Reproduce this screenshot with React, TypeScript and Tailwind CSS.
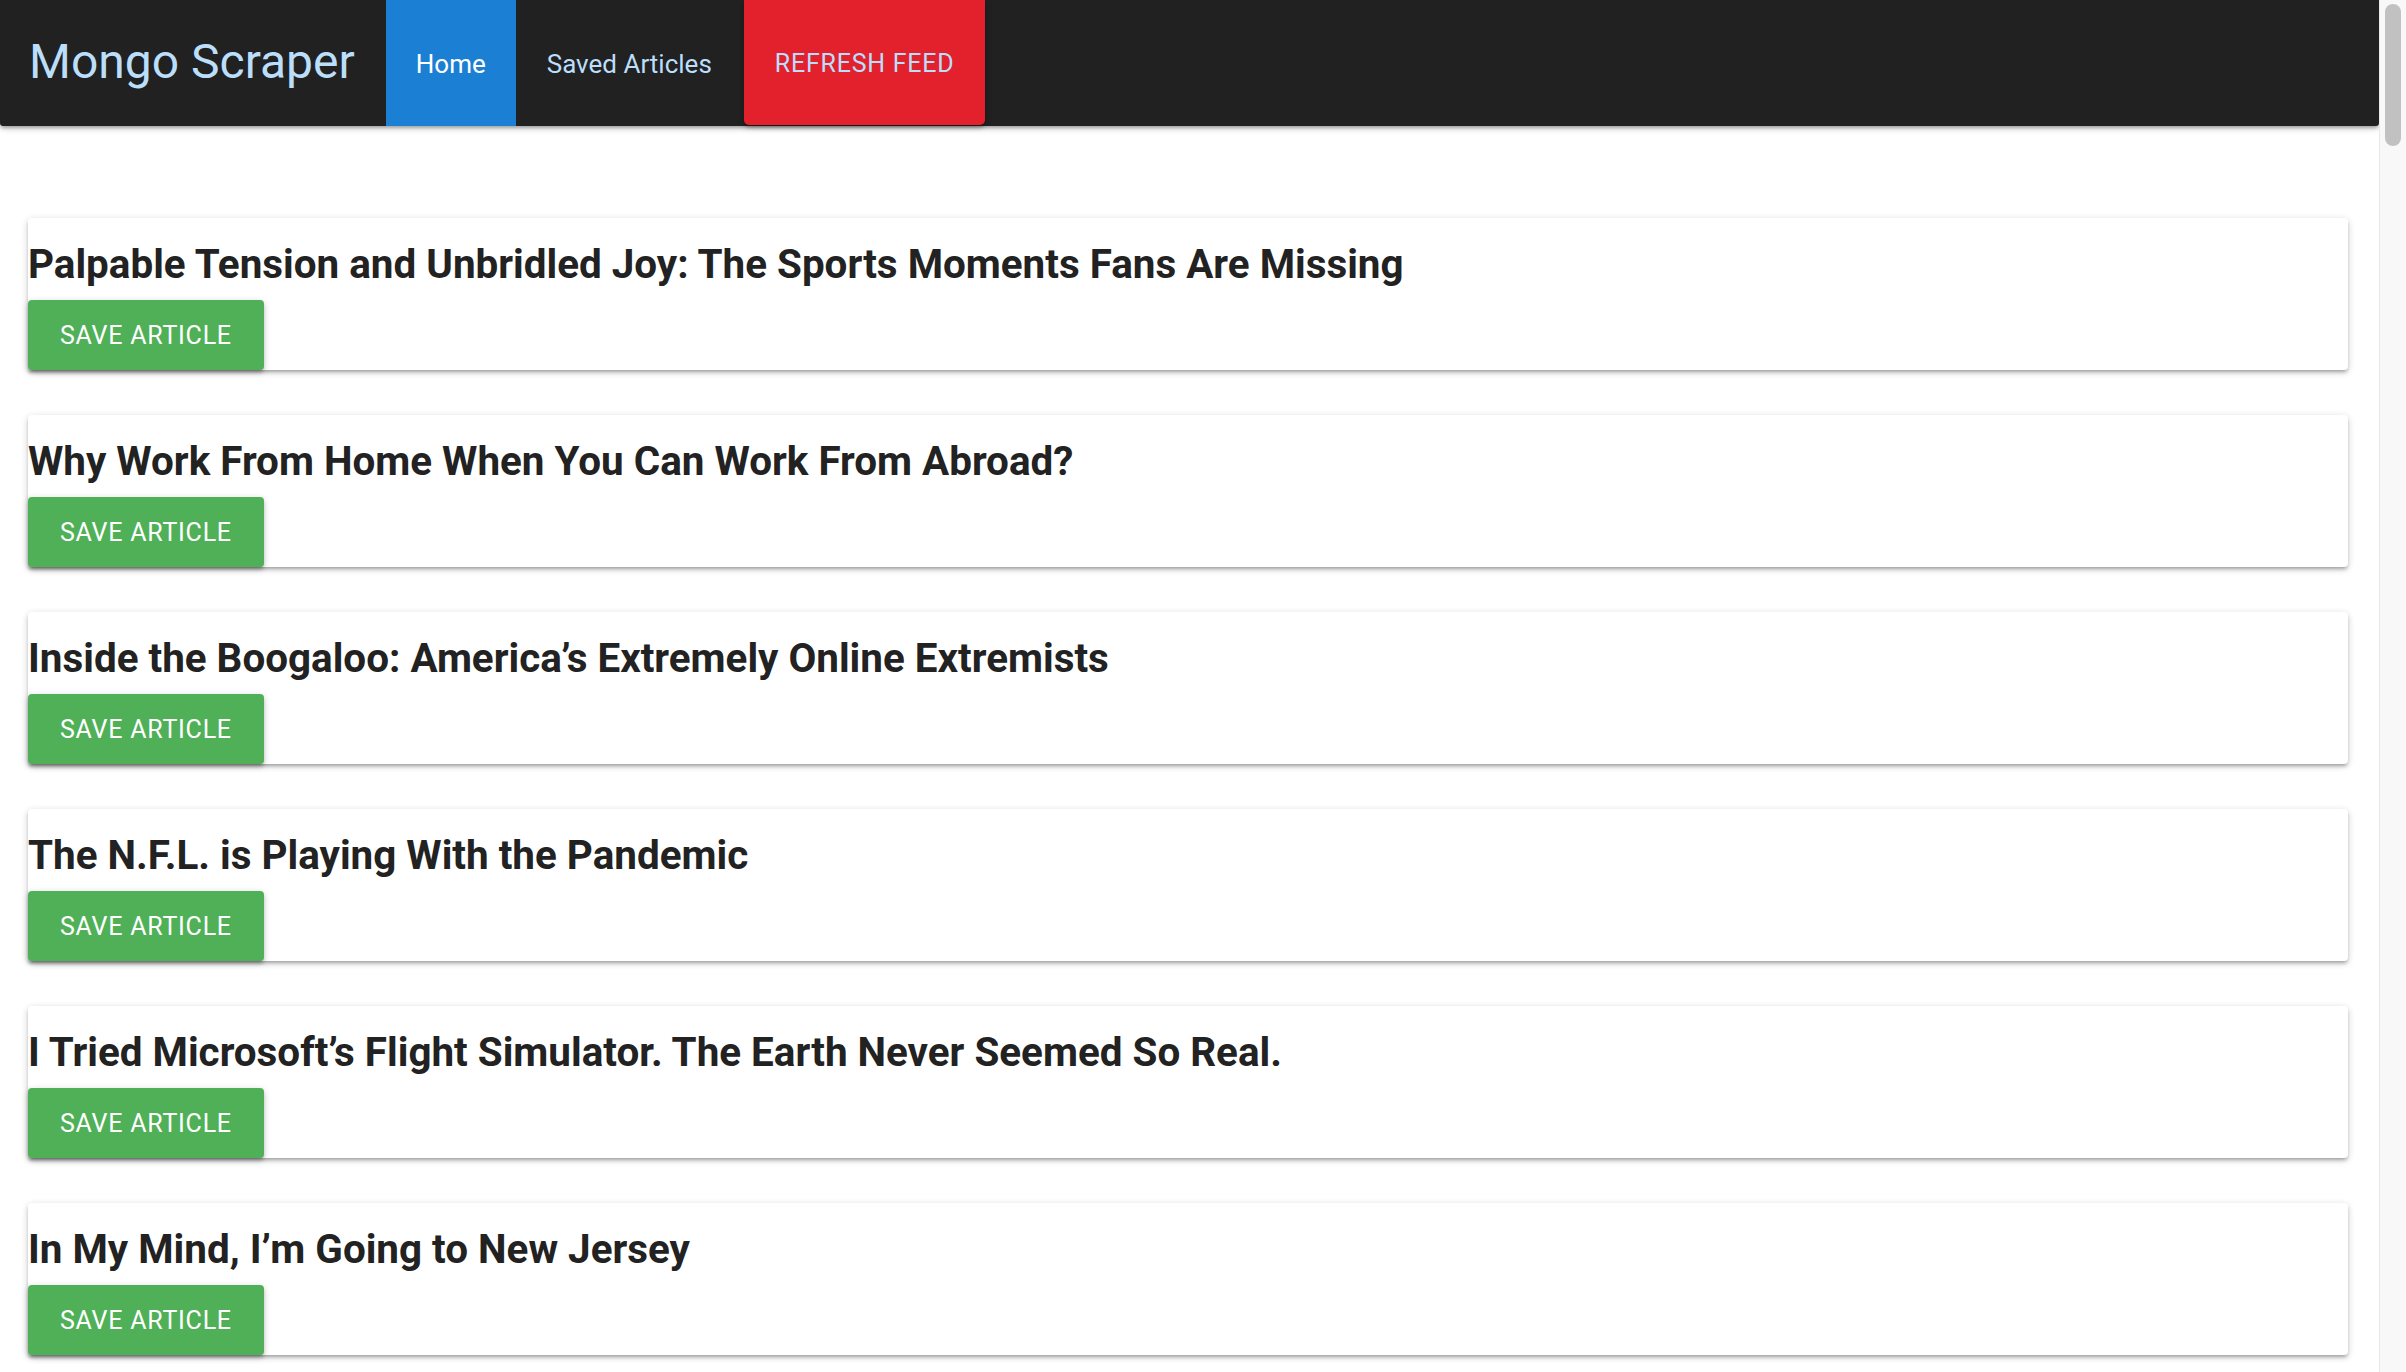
import React from "react";

const articles = [
  "Palpable Tension and Unbridled Joy: The Sports Moments Fans Are Missing",
  "Why Work From Home When You Can Work From Abroad?",
  "Inside the Boogaloo: America\u2019s Extremely Online Extremists",
  "The N.F.L. is Playing With the Pandemic",
  "I Tried Microsoft\u2019s Flight Simulator. The Earth Never Seemed So Real.",
  "In My Mind, I\u2019m Going to New Jersey",
];

export default function App() {
  return (
    <div
      className="flex h-[1372px] w-[2406px] overflow-hidden bg-white"
      style={{ fontFamily: "Roboto, 'Noto Sans', sans-serif" }}
    >
      <div className="flex min-w-0 flex-1 flex-col overflow-hidden">
        <nav className="relative z-10 flex h-[126px] w-full shrink-0 items-stretch rounded-b-[3px] bg-[#212121] shadow-[0_3px_3px_0_rgba(0,0,0,0.14),0_4px_2px_-3px_rgba(0,0,0,0.12),0_2px_7px_0_rgba(0,0,0,0.2)]">
          <a className="flex items-center pl-[29px] pr-[31px] pb-[3px] text-[48px] font-normal leading-none text-[#bbdefb]">
            Mongo Scraper
          </a>
          <a className="flex items-center bg-[#1b7fd3] px-[30px] pt-[2px] text-[26px] text-white">
            Home
          </a>
          <a className="flex items-center pl-[31px] pr-[32px] pt-[2px] text-[26px] text-[#bbdefb]">
            Saved Articles
          </a>
          <button className="mb-[1px] flex items-center rounded-b-[5px] bg-[#e3212d] px-[31px] pt-[2px] text-[25px] tracking-[0.75px] uppercase text-[#bbdefb] shadow-[0_3px_3px_0_rgba(0,0,0,0.14),0_4px_2px_-3px_rgba(0,0,0,0.12),0_2px_7px_0_rgba(0,0,0,0.2)]">
            Refresh Feed
          </button>
        </nav>
        <main className="flex flex-col gap-[45px] pl-[28px] pr-[31px] pt-[92px]">
          {articles.map((t) => (
            <div
              key={t}
              className="flex h-[152px] shrink-0 flex-col items-start rounded-[4px] bg-white shadow-[0_3px_3px_0_rgba(0,0,0,0.14),0_4px_2px_-3px_rgba(0,0,0,0.12),0_2px_7px_0_rgba(0,0,0,0.2)]"
            >
              <h5 className="h-[82px] pt-[11px] text-[40.4px] font-bold leading-[71px] text-[#222222]">
                {t}
              </h5>
              <button className="h-[70px] rounded-[4px] bg-[#4fb058] px-[32px] pt-[1px] text-[25px] tracking-[0.75px] uppercase leading-[69px] text-white shadow-[0_3px_3px_0_rgba(0,0,0,0.14),0_4px_2px_-3px_rgba(0,0,0,0.12),0_2px_7px_0_rgba(0,0,0,0.2)]">
                Save Article
              </button>
            </div>
          ))}
        </main>
      </div>
      <div className="flex w-[27px] shrink-0 justify-center border-l border-[#e8e8e8] bg-[#f8f8f8] pt-[4px]">
        <div className="h-[142px] w-[16px] rounded-full bg-[#c1c1c1]" />
      </div>
    </div>
  );
}
